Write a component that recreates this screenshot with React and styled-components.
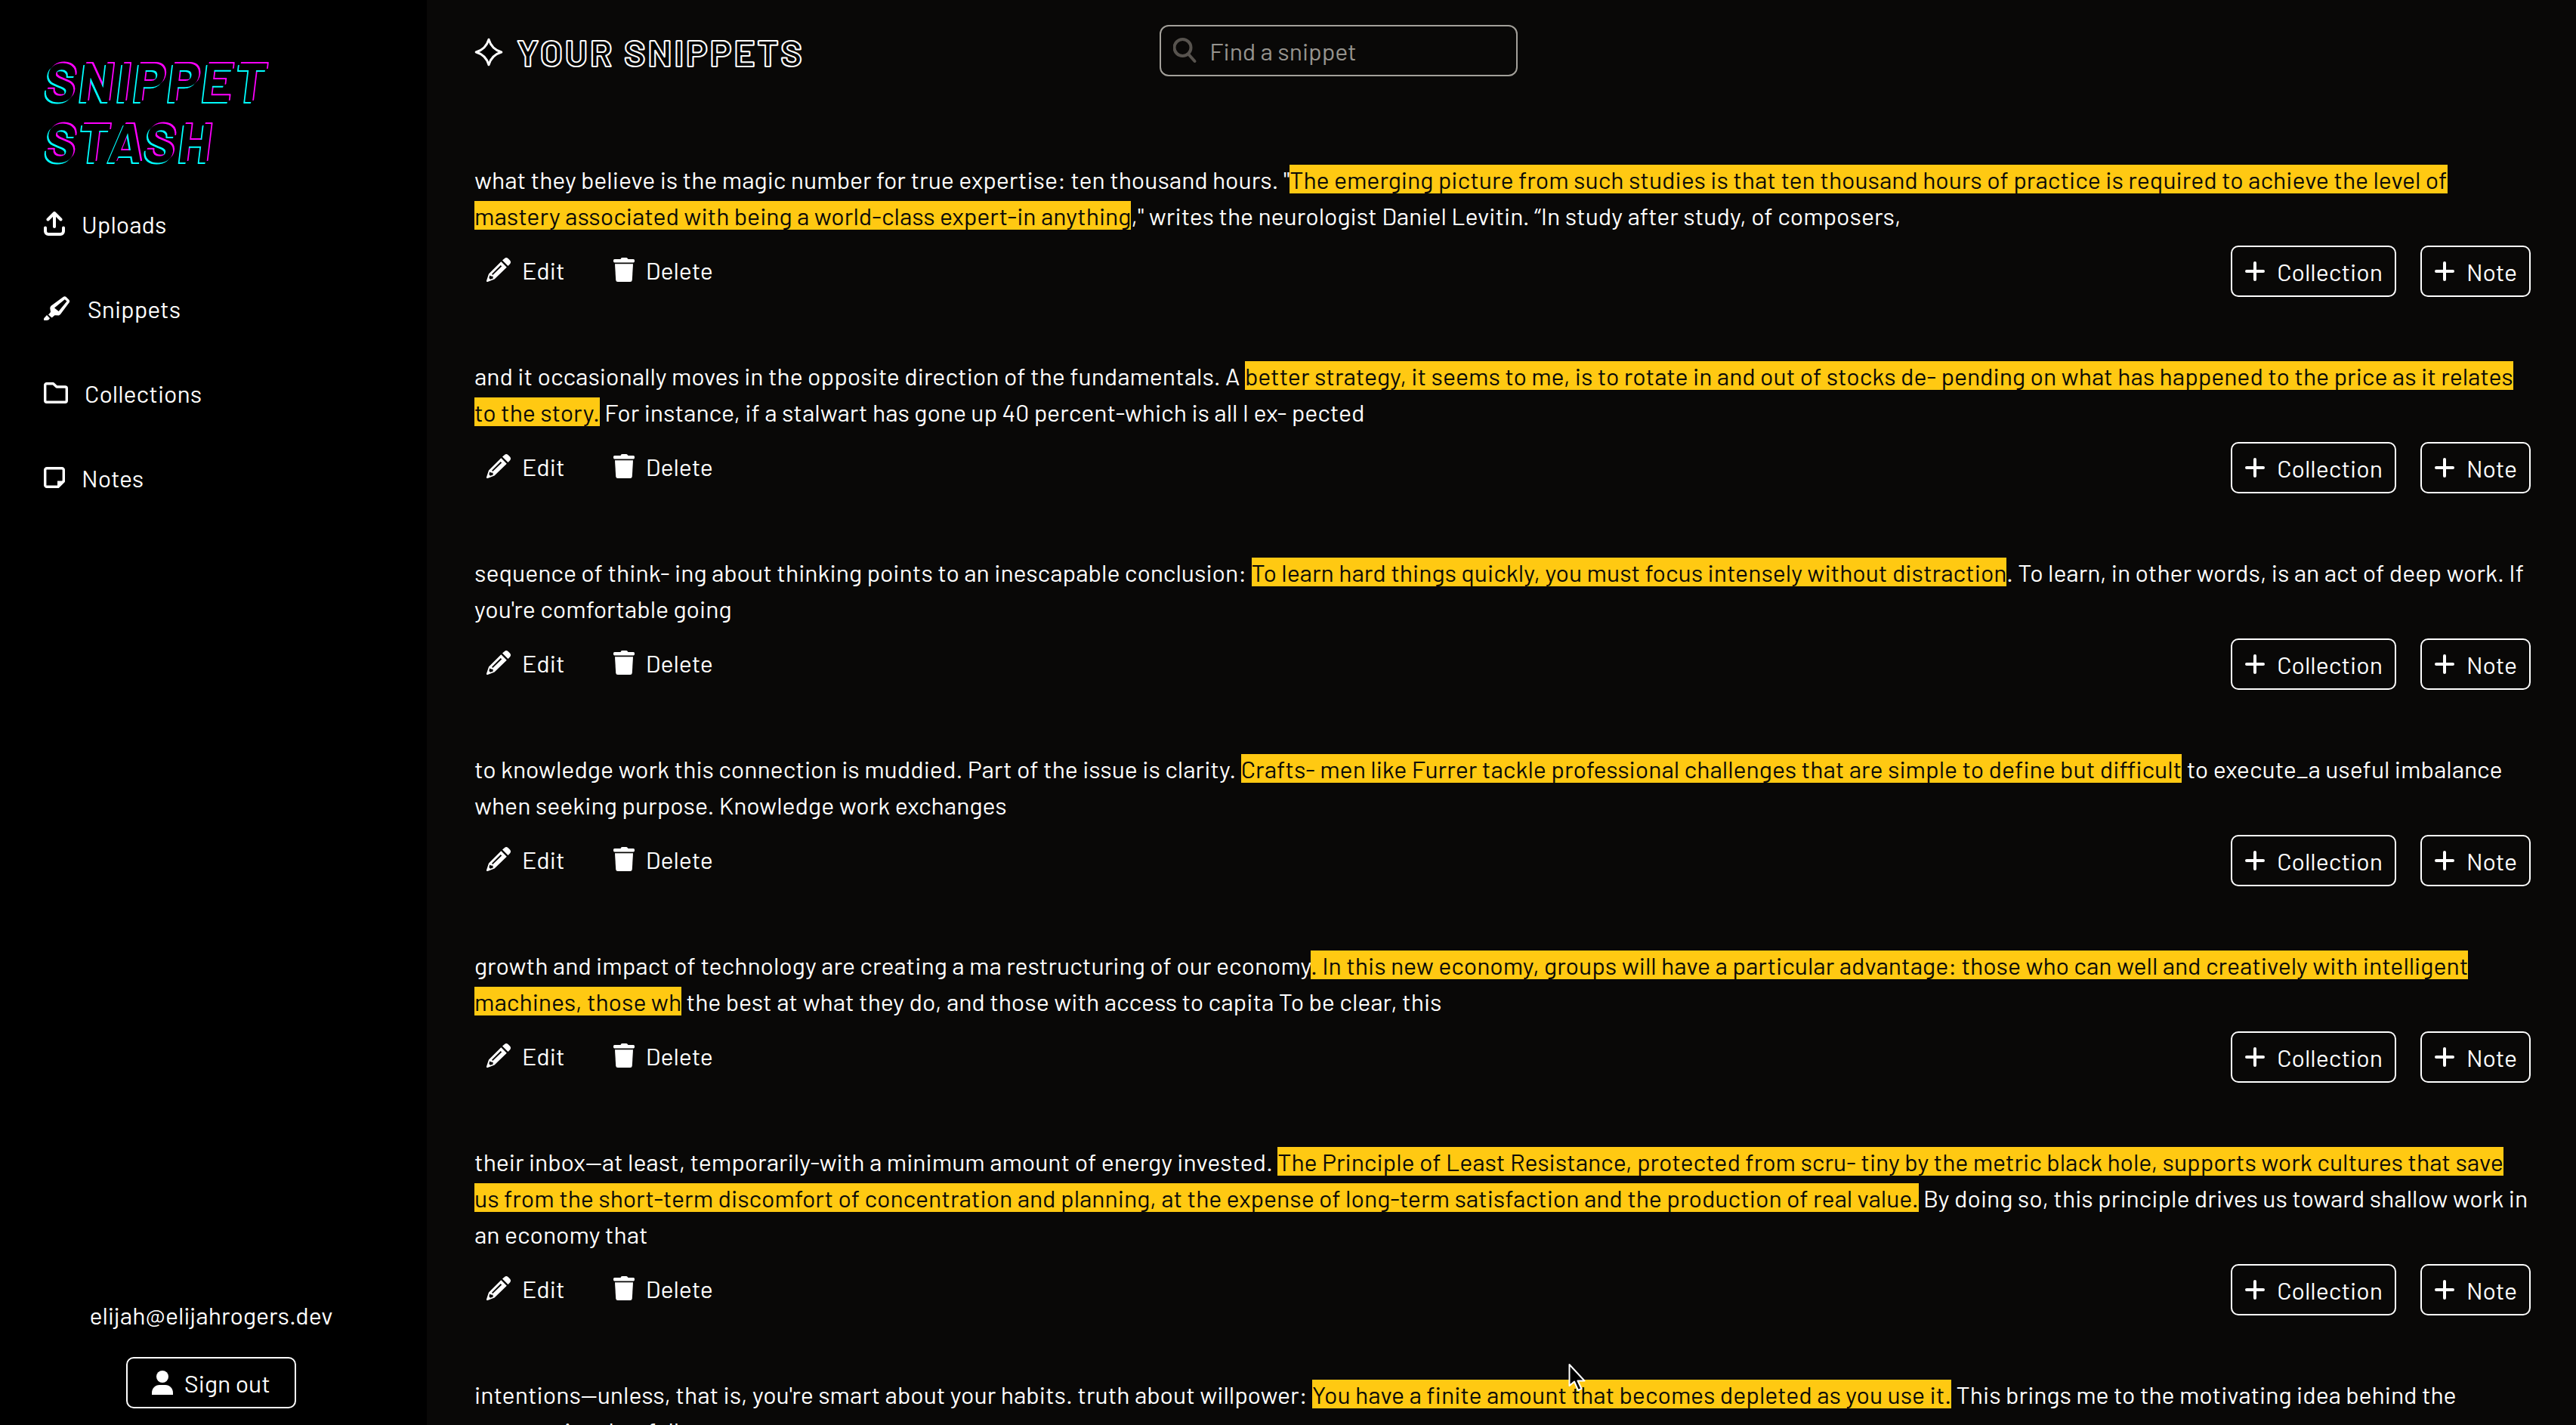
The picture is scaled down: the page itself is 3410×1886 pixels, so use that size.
import React from 'react';
import styled, { createGlobalStyle } from 'styled-components';

const GlobalStyle = createGlobalStyle`
  *, *::before, *::after { box-sizing: border-box; }
  body {
    margin: 0;
    background: #090807;
    color: #fff;
    font-family: Barlow, Roboto, sans-serif;
    font-size: 32px;
    line-height: 48px;
  }
  button, input { font: inherit; color: inherit; }
`;

const Page = styled.div`
  position: relative;
  display: flex;
  height: 100vh;
  overflow: hidden;
`;

const Sidebar = styled.aside`
  flex: 0 0 565px;
  display: flex;
  flex-direction: column;
  padding: 66px 64px 22px 58px;
  background: #000;
`;

const Logo = styled.h1`
  margin: 0 0 46px;
  color: #000;
  font-size: 72px;
  font-style: italic;
  font-weight: 700;
  line-height: 80px;
  letter-spacing: 0.05em;
  text-transform: uppercase;
  text-shadow: -2px 2px #0ff, 2px -2px #f0f;
`;

const Nav = styled.nav`
  display: flex;
  flex-direction: column;
  gap: 64px;
`;

const NavLink = styled.a`
  display: flex;
  align-items: center;
  gap: 22px;
  color: #fff;
  text-decoration: none;
`;

const Account = styled.div`
  display: flex;
  flex-direction: column;
  align-items: center;
  gap: 32px;
  margin-top: auto;
`;

const Main = styled.main`
  flex: 1;
  min-width: 0;
  padding: 33px 60px 0 63px;
`;

const Header = styled.header`
  display: grid;
  grid-template-columns: repeat(3, 1fr);
  align-items: center;
  margin-bottom: 112px;
`;

const Title = styled.h2`
  display: flex;
  align-items: center;
  gap: 18px;
  margin: 0;
  padding-top: 4px;
  font-size: 48px;
  font-weight: 700;
  letter-spacing: 3px;
  text-transform: uppercase;
  color: #000;
  -webkit-text-stroke: 2px #fff;
`;

const Search = styled.label`
  display: flex;
  align-items: center;
  gap: 16px;
  width: 474px;
  height: 68px;
  padding: 0 16px;
  border: 2px solid #a3a09a;
  border-radius: 12px;
  color: #57534e;
`;

const SearchInput = styled.input`
  flex: 1;
  min-width: 0;
  padding: 0;
  border: 0;
  outline: 0;
  background: none;
  color: #fff;
  &::placeholder { color: #96948f; opacity: 1; }
`;

const List = styled.ul`
  display: flex;
  flex-direction: column;
  gap: 80px;
  margin: 0;
  padding: 0;
  list-style: none;
`;

const Snippet = styled.li`
  display: flex;
  flex-direction: column;
  gap: 16px;
`;

const Passage = styled.p`
  margin: 0;
`;

const Highlight = styled.mark`
  background: #ffc912;
  color: #0a0a08;
`;

const Actions = styled.div`
  display: flex;
  align-items: flex-start;
  justify-content: space-between;
`;

const Group = styled.div`
  display: flex;
  gap: 32px;
`;

const Button = styled.button`
  display: flex;
  align-items: center;
  gap: 15px;
  padding: ${p => (p.$wide ? '0 32px' : '0 16px')};
  height: ${p => (p.$outlined ? '68px' : '64px')};
  border: ${p => (p.$outlined ? '2px solid #fff' : '0')};
  border-radius: 10px;
  background: none;
  cursor: pointer;
`;

const Svg = styled.svg`
  flex: none;
  display: block;
  fill: none;
  stroke: currentColor;
  stroke-linecap: round;
  stroke-linejoin: round;
`;

const Pointer = styled(Svg)`
  position: absolute;
  left: 2076px;
  top: 1804px;
  pointer-events: none;
`;

const icon = (w, h, body) => () => (
  <Svg width={w} height={h} viewBox={`0 0 ${w} ${h}`} aria-hidden="true">{body}</Svg>
);

const UploadIcon = icon(28, 32, (
  <path strokeWidth="4" d="M14 20V2.5M5.500 10.500 14 2l8.500 8.500M2 21.500V26a4 4 0 0 0 4 4h16a4 4 0 0 0 4-4v-4.500" />
));
const MarkerIcon = icon(36, 32, (
  <g fill="currentColor" stroke="none">
    <path d="M0 31.500V29.500L4 25l4 4.200-1.500 2L4 32H.5z" />
    <path fillRule="evenodd" d="M6 24.500 9 21 8.200 15.500 9.300 13 26 .8Q27.800-.5 29.500 1L33.300 4.800Q34.800 6.500 33.500 8.500L22 24 20 25.600 14.500 25.300 10.600 28.500zM14 15.600l5.600 4.400L30.500 6.800 27.800 4.300z" />
  </g>
));
const FolderIcon = icon(32, 28, (
  <path strokeWidth="3.400" d="M3.700 1.700H12.500L17 6H28.300a2 2 0 0 1 2 2V24.300a2 2 0 0 1-2 2H3.700a2 2 0 0 1-2-2V3.700a2 2 0 0 1 2-2z" />
));
const NoteIcon = icon(28, 28, (
  <>
    <path strokeWidth="3.400" d="M4 1.700H24a2.300 2.300 0 0 1 2.300 2.300V19L19 26.300H4A2.300 2.300 0 0 1 1.700 24V4A2.300 2.300 0 0 1 4 1.700z" />
    <path fill="currentColor" stroke="none" d="M18 27V18.500H27V20L20 27z" />
  </>
));
const PencilIcon = icon(32, 32, (
  <g stroke="none" fill="currentColor">
    <path d="M21 3.500 24 1Q26 -.8 28.500 1L31 3.500Q33 6 31.200 8.200L28.500 11z" />
    <path fillRule="evenodd" d="M19.300 5.200 26.800 12.700 10.500 28.500 1.500 32Q-.3 32.300 0 30.500L3 21.500zM18.800 10 7 21.800 8.300 23 20.200 11.500zM4.200 23.500 3.400 27 5 28.700 8.700 27.500 8.500 24.700 6 24.600z" />
  </g>
));
const TrashIcon = icon(28, 32, (
  <g stroke="none" fill="currentColor">
    <path d="M9.500 2 10.500.3Q11 0 12 0H17Q18 0 18.500.7L19.500 2H26.500A1.500 1.500 0 0 1 28 3.500V5A1.500 1.500 0 0 1 26.500 6.400H1.500A1.500 1.500 0 0 1 0 5V3.500A1.500 1.500 0 0 1 1.500 2z" />
    <path d="M2 8.300H26L24.800 29.500Q24.600 32 22.200 32H5.800Q3.400 32 3.200 29.500z" />
  </g>
));
const PlusIcon = icon(28, 28, <path strokeWidth="4" d="M14 3V25M3 14H25" />);
const UserIcon = icon(28, 32, (
  <g stroke="none" fill="currentColor">
    <circle cx="14" cy="8" r="8" />
    <path d="M0 32V29.500C0 23.500 4.500 19 10 19H18C23.500 19 28 23.500 28 29.500V32z" />
  </g>
));
const SearchIcon = icon(32, 36, (
  <>
    <circle cx="12.500" cy="14" r="11" strokeWidth="4" />
    <path strokeWidth="4" d="M20.500 23 28.500 32" />
  </>
));
const StarIcon = icon(38, 38, (
  <path fill="#000" stroke="#fff" strokeWidth="3" d="M19 2.200C21.500 11 27 16.500 35.800 19C27 21.500 21.500 27 19 35.800C16.500 27 11 21.500 2.200 19C11 16.500 16.500 11 19 2.200z" />
));

const links = [
  ['Uploads', UploadIcon],
  ['Snippets', MarkerIcon],
  ['Collections', FolderIcon],
  ['Notes', NoteIcon],
];

const snippets = [
  ['what they believe is the magic number for true expertise: ten thousand hours. "', 'The emerging picture from such studies is that ten thousand hours of practice is required to achieve the level of mastery associated with being a world-class expert-in anything', '," writes the neurologist Daniel Levitin. “In study after study, of composers,'],
  ['and it occasionally moves in the opposite direction of the fundamentals. A ', 'better strategy, it seems to me, is to rotate in and out of stocks de- pending on what has happened to the price as it relates to the story.', ' For instance, if a stalwart has gone up 40 percent-which is all I ex- pected'],
  ['sequence of think- ing about thinking points to an inescapable conclusion: ', 'To learn hard things quickly, you must focus intensely without distraction', ". To learn, in other words, is an act of deep work. If you're comfortable going"],
  ['to knowledge work this connection is muddied. Part of the issue is clarity. ', 'Crafts- men like Furrer tackle professional challenges that are simple to define but difficult', ' to execute_a useful imbalance when seeking purpose. Knowledge work exchanges'],
  ['growth and impact of technology are creating a ma restructuring of our economy', '. In this new economy, groups will have a particular advantage: those who can well and creatively with intelligent machines, those wh', ' the best at what they do, and those with access to capita To be clear, this'],
  ['their inbox—at least, temporarily-with a minimum amount of energy invested. ', 'The Principle of Least Resistance, protected from scru- tiny by the metric black hole, supports work cultures that save us from the short-term discomfort of concentration and planning, at the expense of long-term satisfaction and the production of real value.', ' By doing so, this principle drives us toward shallow work in an economy that'],
  ["intentions—unless, that is, you're smart about your habits. truth about willpower: ", 'You have a finite amount that becomes depleted as you use it.', ' This brings me to the motivating idea behind the strate- gies that follow'],
];

export default function App() {
  return (
    <Page>
      <GlobalStyle />
      <Sidebar>
        <Logo>Snippet<br />Stash</Logo>
        <Nav>
          {links.map(([label, Icon]) => (
            <NavLink key={label} href="#"><Icon />{label}</NavLink>
          ))}
        </Nav>
        <Account>
          <span>elijah@elijahrogers.dev</span>
          <Button $outlined $wide><UserIcon />Sign out</Button>
        </Account>
      </Sidebar>
      <Main>
        <Header>
          <Title><StarIcon />Your Snippets</Title>
          <Search>
            <SearchIcon />
            <SearchInput type="text" placeholder="Find a snippet" aria-label="Find a snippet" />
          </Search>
        </Header>
        <List>
          {snippets.map(([before, marked, after]) => (
            <Snippet key={before}>
              <Passage>{before}<Highlight>{marked}</Highlight>{after}</Passage>
              <Actions>
                <Group>
                  <Button><PencilIcon />Edit</Button>
                  <Button><TrashIcon />Delete</Button>
                </Group>
                <Group>
                  <Button $outlined><PlusIcon />Collection</Button>
                  <Button $outlined><PlusIcon />Note</Button>
                </Group>
              </Actions>
            </Snippet>
          ))}
        </List>
      </Main>
      <Pointer width="24" height="38" viewBox="0 0 24 38" aria-hidden="true">
        <path fill="#000" stroke="#fff" strokeWidth="2" d="M1.500 2V30L8 24.500 13 36 17.500 34 12.500 23.500H21.500z" />
      </Pointer>
    </Page>
  );
}
